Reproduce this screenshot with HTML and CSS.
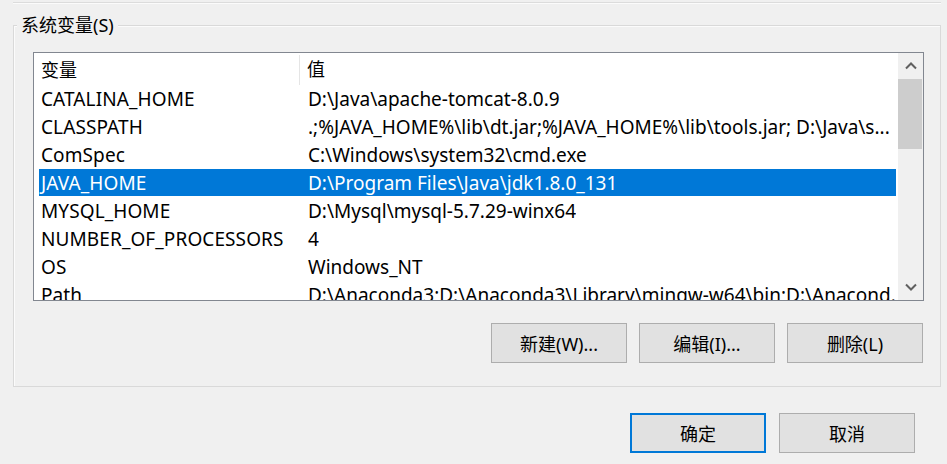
FILE: index.html
```html
<!DOCTYPE html>
<html lang="zh-CN">
<head>
<meta charset="utf-8">
<title>系统变量</title>
<link rel="stylesheet" href="styles.css">
</head>
<body>
<div class="page">
  <div class="prev-edge"></div>
  <div class="group">
    <span class="group-label">系统变量(S)</span>
    <div class="listbox">
      <div class="list-content">
        <div class="list-header">
          <div class="hcell c1">变量</div>
          <div class="hcell c2">值</div>
        </div>
        <div class="row"><div class="cell c1">CATALINA_HOME</div><div class="cell c2">D:\Java\apache-tomcat-8.0.9</div></div>
        <div class="row"><div class="cell c1">CLASSPATH</div><div class="cell c2">.;%JAVA_HOME%\lib\dt.jar;%JAVA_HOME%\lib\tools.jar; D:\Java\s...</div></div>
        <div class="row"><div class="cell c1">ComSpec</div><div class="cell c2">C:\Windows\system32\cmd.exe</div></div>
        <div class="row selected"><div class="cell c1">JAVA_HOME</div><div class="cell c2">D:\Program Files\Java\jdk1.8.0_131</div></div>
        <div class="row"><div class="cell c1">MYSQL_HOME</div><div class="cell c2">D:\Mysql\mysql-5.7.29-winx64</div></div>
        <div class="row"><div class="cell c1">NUMBER_OF_PROCESSORS</div><div class="cell c2">4</div></div>
        <div class="row"><div class="cell c1">OS</div><div class="cell c2">Windows_NT</div></div>
        <div class="row"><div class="cell c1">Path</div><div class="cell c2">D:\Anaconda3;D:\Anaconda3\Library\mingw-w64\bin;D:\Anacond...</div></div>
      </div>
      <div class="scrollbar">
        <div class="sb-btn">
          <svg width="12" height="8" viewBox="0 0 12 8"><path d="M1 6.5 L6 1.5 L11 6.5" fill="none" stroke="#606060" stroke-width="2"/></svg>
        </div>
        <div class="sb-track"><div class="sb-thumb"></div></div>
        <div class="sb-btn">
          <svg width="12" height="8" viewBox="0 0 12 8"><path d="M1 1.5 L6 6.5 L11 1.5" fill="none" stroke="#606060" stroke-width="2"/></svg>
        </div>
      </div>
    </div>
    <div class="btn-row">
      <button class="btn">新建(W)...</button>
      <button class="btn">编辑(I)...</button>
      <button class="btn">删除(L)</button>
    </div>
  </div>
  <div class="dialog-buttons">
    <button class="btn default">确定</button>
    <button class="btn">取消</button>
  </div>
</div>
</body>
</html>
```

FILE: styles.css
```css
html, body {
  margin: 0;
  padding: 0;
  background: #f0f0f0;
}
body {
  width: 947px;
  height: 464px;
  overflow: hidden;
  font-family: "Noto Sans", "Noto Sans CJK SC", sans-serif;
  font-size: 18px;
  color: #000;
}
.page {
  padding-top: 2px;
}
.prev-edge {
  margin-left: 13px;
  width: 928px;
  height: 1px;
  border-top: 1px solid #dcdcdc;
  background: #fbfbfb;
}
.group {
  position: relative;
  margin-top: 21px;
  margin-left: 13px;
  width: 928px;
  height: 362px;
  box-sizing: border-box;
  border: 1px solid #d9d9d9;
  box-shadow: inset 1px 1px 0 #fbfbfb;
  padding: 26px 0 0 19px;
}
.group-label {
  position: absolute;
  top: -13px;
  left: 3px;
  padding: 0 4px;
  background: #f0f0f0;
  line-height: 24px;
}
.listbox {
  width: 891px;
  height: 249px;
  box-sizing: border-box;
  border: 1px solid #828790;
  background: #fff;
  display: flex;
  overflow: hidden;
}
.list-content {
  flex: 1;
  overflow: hidden;
}
.list-header {
  display: flex;
  height: 32px;
  align-items: center;
}
.hcell {
  line-height: 30px;
  white-space: nowrap;
}
.hcell.c1 {
  width: 266px;
  padding-left: 7px;
  box-sizing: border-box;
  border-right: 1px solid #e5e5e5;
  height: 30px;
  margin-top: 2px;
}
.hcell.c2 {
  padding-left: 7px;
}
.row {
  display: flex;
  height: 27px;
  margin: 0 2px 1px 5px;
  align-items: flex-start;
  white-space: nowrap;
}
.row.selected {
  background: #0078d7;
  color: #fff;
}
.cell {
  font-size: 19px;
  line-height: 27px;
  padding-top: 1px;
}
.cell.c1 {
  width: 262px;
  flex: none;
  padding-left: 2px;
  box-sizing: border-box;
  letter-spacing: 0.1px;
}
.cell.c2 {
  padding-left: 7px;
  overflow: hidden;
}
.scrollbar {
  width: 25px;
  flex: none;
  background: #f0f0f0;
  display: flex;
  flex-direction: column;
}
.sb-btn {
  height: 26px;
  display: flex;
  align-items: center;
  justify-content: center;
}
.sb-track {
  flex: 1;
}
.sb-thumb {
  height: 70px;
  margin: 0 1px 0 0;
  background: #cdcdcd;
}
.btn-row {
  display: flex;
  justify-content: flex-end;
  gap: 12px;
  margin-top: 22px;
  width: 890px;
}
.btn {
  width: 136px;
  height: 40px;
  box-sizing: border-box;
  border: 1px solid #adadad;
  background: #e1e1e1;
  font-family: "Noto Sans", "Noto Sans CJK SC", sans-serif;
  font-size: 18px;
  color: #000;
  padding: 0;
  margin: 0;
}
.btn.default {
  border: 2px solid #0078d7;
}
.dialog-buttons {
  display: flex;
  justify-content: flex-end;
  gap: 13px;
  margin-top: 26px;
  padding-right: 32px;
}
```
